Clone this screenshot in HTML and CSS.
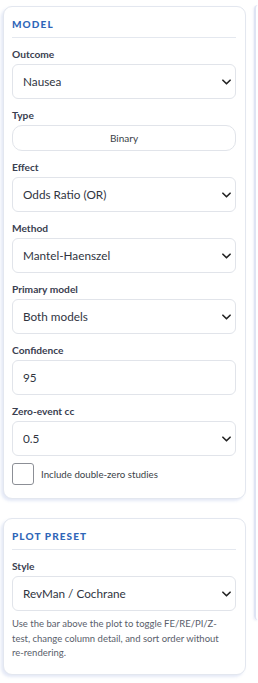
FILE: index.html
```html
<!DOCTYPE html>
<html lang="en">
<head>
<meta charset="utf-8">
<title>Model settings</title>
<link rel="stylesheet" href="styles.css">
</head>
<body>
<div class="layout">
  <aside class="sidebar">
    <section class="card">
      <h2 class="card-title">Model</h2>
      <div class="field">
        <label class="label">Outcome</label>
        <div class="select-wrap">
          <select class="control"><option>Nausea</option></select>
          <svg class="chev" viewBox="0 0 10 6" width="9" height="6"><path d="M1 1l4 4 4-4" fill="none" stroke="#222" stroke-width="1.8" stroke-linecap="round" stroke-linejoin="round"/></svg>
        </div>
      </div>
      <div class="field">
        <label class="label">Type</label>
        <div class="pill">Binary</div>
      </div>
      <div class="field">
        <label class="label">Effect</label>
        <div class="select-wrap">
          <select class="control"><option>Odds Ratio (OR)</option></select>
          <svg class="chev" viewBox="0 0 10 6" width="9" height="6"><path d="M1 1l4 4 4-4" fill="none" stroke="#222" stroke-width="1.8" stroke-linecap="round" stroke-linejoin="round"/></svg>
        </div>
      </div>
      <div class="field">
        <label class="label">Method</label>
        <div class="select-wrap">
          <select class="control"><option>Mantel-Haenszel</option></select>
          <svg class="chev" viewBox="0 0 10 6" width="9" height="6"><path d="M1 1l4 4 4-4" fill="none" stroke="#222" stroke-width="1.8" stroke-linecap="round" stroke-linejoin="round"/></svg>
        </div>
      </div>
      <div class="field">
        <label class="label">Primary model</label>
        <div class="select-wrap">
          <select class="control"><option>Both models</option></select>
          <svg class="chev" viewBox="0 0 10 6" width="9" height="6"><path d="M1 1l4 4 4-4" fill="none" stroke="#222" stroke-width="1.8" stroke-linecap="round" stroke-linejoin="round"/></svg>
        </div>
      </div>
      <div class="field">
        <label class="label">Confidence</label>
        <input class="control" type="text" value="95">
      </div>
      <div class="field">
        <label class="label">Zero-event cc</label>
        <div class="select-wrap">
          <select class="control"><option>0.5</option></select>
          <svg class="chev" viewBox="0 0 10 6" width="9" height="6"><path d="M1 1l4 4 4-4" fill="none" stroke="#222" stroke-width="1.8" stroke-linecap="round" stroke-linejoin="round"/></svg>
        </div>
      </div>
      <label class="check">
        <span class="box"></span>
        <span class="check-text">Include double-zero studies</span>
      </label>
    </section>

    <section class="card">
      <h2 class="card-title">Plot preset</h2>
      <div class="field">
        <label class="label">Style</label>
        <div class="select-wrap">
          <select class="control"><option>RevMan / Cochrane</option></select>
          <svg class="chev" viewBox="0 0 10 6" width="9" height="6"><path d="M1 1l4 4 4-4" fill="none" stroke="#222" stroke-width="1.8" stroke-linecap="round" stroke-linejoin="round"/></svg>
        </div>
      </div>
      <p class="help">Use the bar above the plot to toggle FE/RE/PI/Z-test, change column detail, and sort order without re-rendering.</p>
    </section>
  </aside>
  <main class="main">
    <div class="main-panel"></div>
  </main>
</div>
</body>
</html>
```

FILE: styles.css
```css
* { box-sizing: border-box; }

html, body {
  margin: 0;
  padding: 0;
  background: #ffffff;
}

body {
  font-family: Lato, "Noto Sans", sans-serif;
  color: #333a45;
  width: 258px;
  height: 683px;
  overflow: hidden;
}

.layout {
  display: flex;
  align-items: flex-start;
}

.sidebar {
  width: 250px;
  flex: none;
  padding: 6px 0 0 3px;
  display: flex;
  flex-direction: column;
  gap: 19px;
}

.card {
  width: 243px;
  background: #ffffff;
  border: 1px solid #e3e7ef;
  border-radius: 9px;
  padding: 10px 9px 13px 8px;
  box-shadow: -2px 2px 3px rgba(90, 120, 200, 0.16);
}

.card-title {
  margin: 0;
  font-size: 10px;
  line-height: 14px;
  font-weight: 900;
  letter-spacing: 1.1px;
  text-transform: uppercase;
  color: #2f66b8;
  padding-bottom: 6px;
  border-bottom: 1px solid #e4e8ef;
}

.field {
  display: flex;
  flex-direction: column;
  gap: 3px;
  margin-top: 9px;
}

.label {
  font-size: 10.2px;
  line-height: 14px;
  font-weight: 700;
  color: #3a4050;
}

.select-wrap {
  position: relative;
}

.control {
  display: block;
  width: 100%;
  height: 35px;
  margin: 0;
  padding: 0 24px 0 10px;
  border: 1px solid #e1e4ea;
  border-radius: 6px;
  background: #ffffff;
  font-family: Lato, "Noto Sans", sans-serif;
  font-size: 11.75px;
  color: #30353f;
  -webkit-appearance: none;
  appearance: none;
  outline: none;
}

.chev {
  position: absolute;
  right: 5px;
  top: 15px;
  pointer-events: none;
}

.pill {
  height: 26px;
  border: 1px solid #e1e4ea;
  border-radius: 10px;
  display: flex;
  align-items: center;
  justify-content: center;
  font-size: 10px;
  color: #3a3f48;
}

.check {
  display: flex;
  align-items: center;
  gap: 7px;
  margin-top: 7px;
  height: 22px;
}

.box {
  width: 22px;
  height: 22px;
  border: 1.5px solid #8c8f96;
  border-radius: 3px;
  background: #ffffff;
  flex: none;
}

.check-text {
  font-size: 9.7px;
  color: #3a3f48;
}

.help {
  margin: 6px 0 0;
  padding-right: 6px;
  font-size: 9.5px;
  line-height: 14.5px;
  color: #5a606b;
}

.main {
  flex: 1;
  padding-top: 5px;
  padding-left: 4px;
}

.main-panel {
  height: 615px;
  border-left: 2px solid #dfe4f4;
  border-radius: 6px 0 0 6px;
  box-shadow: -1px 1px 2px rgba(90, 120, 200, 0.1);
}
```
